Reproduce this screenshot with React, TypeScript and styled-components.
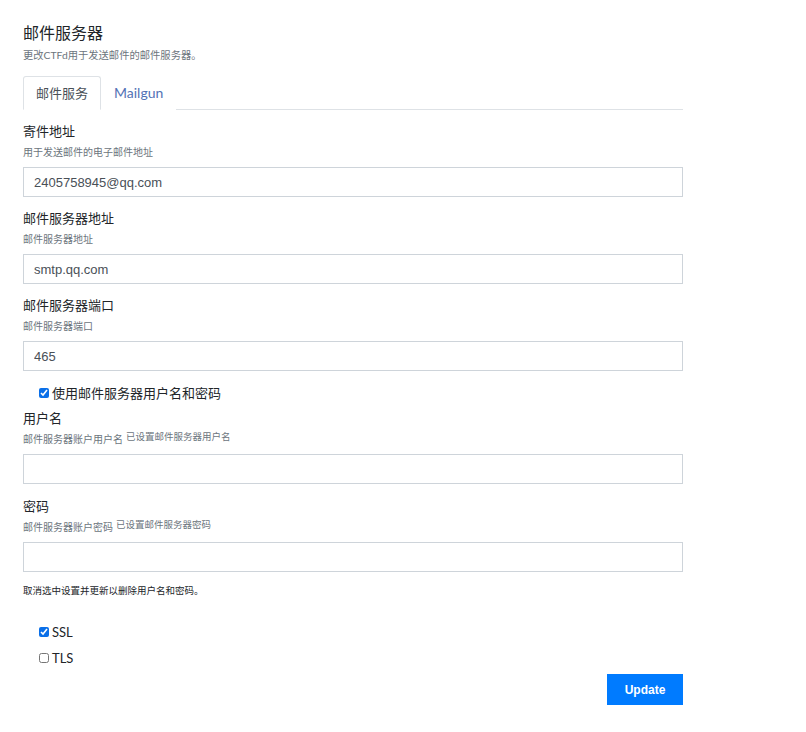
import styled, { createGlobalStyle } from 'styled-components';

const GlobalStyle = createGlobalStyle`
    body {
        margin: 0;
        background: #fff;
        font-family: Lato, "Noto Sans CJK SC", sans-serif;
        color: #212529;
    }
`;

const Page = styled.div`
    width: 660px;
    padding: 22px 0 0 23px;
`;

const Title = styled.h4`
    margin: 0;
    font-size: 16px;
    line-height: 20px;
    font-weight: 400;
    font-family: "Noto Sans CJK SC", sans-serif;
`;

const Subtitle = styled.p`
    margin: 6px 0 0;
    font-size: 10.3px;
    line-height: 14px;
    color: #6c757d;
    font-family: Lato, "Noto Sans CJK SC", sans-serif;
`;

const Tabs = styled.ul`
    list-style: none;
    display: flex;
    margin: 14px 0 0;
    padding: 0;
    border-bottom: 1px solid #dee2e6;
`;

const Tab = styled.li<{ $active?: boolean }>`
    margin-bottom: -1px;
    padding: 8px 12px 8px 12px;
    line-height: 16px;
    font-size: ${p => (p.$active ? '13px' : '14px')};
    color: ${p => (p.$active ? '#495057' : '#5372b5')};
    background: #fff;
    border: 1px solid ${p => (p.$active ? '#dee2e6' : 'transparent')};
    border-bottom-color: ${p => (p.$active ? '#fff' : 'transparent')};
    border-radius: 3px 3px 0 0;
    font-family: Lato, "Noto Sans CJK SC", sans-serif;
`;

const Form = styled.form`
    display: flex;
    flex-direction: column;
    padding-top: 11px;
`;

const Group = styled.div<{ $gap?: number }>`
    display: flex;
    flex-direction: column;
    margin-top: ${p => p.$gap ?? 0}px;
`;

const Label = styled.label`
    font-size: 13px;
    line-height: 20px;
    font-family: "Noto Sans CJK SC", sans-serif;
    color: #212529;
`;

const Help = styled.small`
    display: block;
    height: 14px;
    margin-top: 4px;
    font-size: 10px;
    line-height: 14px;
    color: #6c757d;
    font-family: "Noto Sans CJK SC", sans-serif;
`;

const Set = styled.sup`
    margin-left: 3px;
    font-size: 9.5px;
    vertical-align: 3px;
    line-height: 0;
`;

const Input = styled.input`
    margin-top: 8px;
    height: 30px;
    box-sizing: border-box;
    width: 100%;
    padding: 0 10px;
    border: 1px solid #ced4da;
    border-radius: 0;
    font-size: 13px;
    font-family: "Liberation Sans", Arial, sans-serif;
    color: #495057;
    outline: none;
`;

const Check = styled.label<{ $gap?: number }>`
    display: flex;
    align-items: center;
    margin-top: ${p => p.$gap ?? 0}px;
    padding-left: 16px;
    font-size: 13px;
    line-height: 20px;
    font-family: Lato, "Noto Sans CJK SC", sans-serif;
    color: #212529;

    input {
        width: 10px;
        height: 10px;
        margin: 0 3px 0 0;
        accent-color: #0a6fe8;
    }
`;

const Note = styled.small`
    margin-top: 11px;
    font-size: 9.5px;
    line-height: 14px;
    color: #212529;
    font-family: "Noto Sans CJK SC", sans-serif;
`;

const Footer = styled.div`
    display: flex;
    justify-content: flex-end;
    margin-top: 6px;
`;

const UpdateButton = styled.button`
    width: 76px;
    height: 31px;
    border: none;
    border-radius: 0;
    background: #007bff;
    color: #fff;
    font-size: 12px;
    font-weight: 700;
    font-family: "Liberation Sans", Arial, sans-serif;
`;

export default function App() {
    return (
        <Page>
            <GlobalStyle />
            <Title>邮件服务器</Title>
            <Subtitle>更改CTFd用于发送邮件的邮件服务器。</Subtitle>
            <Tabs>
                <Tab $active>邮件服务</Tab>
                <Tab>Mailgun</Tab>
            </Tabs>
            <Form onSubmit={e => e.preventDefault()}>
                <Group>
                    <Label>寄件地址</Label>
                    <Help>用于发送邮件的电子邮件地址</Help>
                    <Input defaultValue="2405758945@qq.com" />
                </Group>
                <Group $gap={11}>
                    <Label>邮件服务器地址</Label>
                    <Help>邮件服务器地址</Help>
                    <Input defaultValue="smtp.qq.com" />
                </Group>
                <Group $gap={11}>
                    <Label>邮件服务器端口</Label>
                    <Help>邮件服务器端口</Help>
                    <Input defaultValue="465" />
                </Group>
                <Check $gap={12}>
                    <input type="checkbox" defaultChecked />
                    使用邮件服务器用户名和密码
                </Check>
                <Group $gap={5}>
                    <Label>用户名</Label>
                    <Help>
                        邮件服务器账户用户名<Set>已设置邮件服务器用户名</Set>
                    </Help>
                    <Input />
                </Group>
                <Group $gap={12}>
                    <Label>密码</Label>
                    <Help>
                        邮件服务器账户密码<Set>已设置邮件服务器密码</Set>
                    </Help>
                    <Input type="password" />
                </Group>
                <Note>取消选中设置并更新以删除用户名和密码。</Note>
                <Check $gap={25}>
                    <input type="checkbox" defaultChecked />
                    SSL
                </Check>
                <Check $gap={6}>
                    <input type="checkbox" />
                    TLS
                </Check>
                <Footer>
                    <UpdateButton type="submit">Update</UpdateButton>
                </Footer>
            </Form>
        </Page>
    );
}
